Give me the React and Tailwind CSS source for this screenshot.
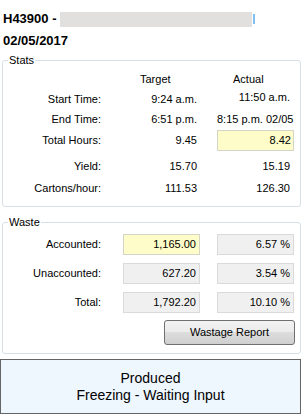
const STATS = [
  { label: 'Start Time:', target: '9:24 a.m.', actual: '11:50 a.m.', h: 'h-[20px]', lift: true },
  { label: 'End Time:', target: '6:51 p.m.', actual: '8:15 p.m. 02/05', h: 'h-[20px]' },
  { label: 'Total Hours:', target: '9.45', actual: '8.42', h: 'h-[23px]', box: true },
  { label: 'Yield:', target: '15.70', actual: '15.19', h: 'h-[28px]' },
  { label: 'Cartons/hour:', target: '111.53', actual: '126.30', h: 'h-[16px]' },
]

const WASTE = [
  { label: 'Accounted:', amount: '1,165.00', pct: '6.57 %', yellow: true },
  { label: 'Unaccounted:', amount: '627.20', pct: '3.54 %' },
  { label: 'Total:', amount: '1,792.20', pct: '10.10 %' },
]

function Box({ children, yellow }) {
  return (
    <div
      className={
        'flex h-[21px] w-[77px] items-center justify-end border pr-[3px] ' +
        (yellow ? 'border-[#d4d4c8] bg-[#fefcc8]' : 'border-[#dadada] bg-[#f0f0f0]')
      }
    >
      {children}
    </div>
  )
}

export default function App() {
  return (
    <div className="h-[415px] w-[303px] overflow-hidden bg-white font-['Liberation_Sans',Arial,sans-serif] text-[11px] leading-[13px] text-black">
      <div className="pl-[3px] pt-[8px] text-[13px] font-bold leading-[22px]">
        <div className="flex items-center whitespace-nowrap">
          <span>H43900 -&nbsp;</span>
          <span className="inline-block h-[15px] w-[192px] bg-[#e1e0de]" />
          <span className="ml-[1px] inline-block h-[10px] w-[2px] bg-[#7fbff2]" />
        </div>
        <div>02/05/2017</div>
      </div>

      <fieldset className="mx-[2px] mt-[2px] w-[299px] rounded-[3px] border border-[#d5dfe5] pb-[10px]">
        <legend className="ml-[5px] px-[1px]">Stats</legend>
        <div className="pt-[2px]">
          <div className="flex h-[20px] items-center">
            <div className="w-[98px]" />
            <div className="w-[96px] pl-[39px]">Target</div>
            <div className="ml-[20px] w-[77px] pl-[16px]">Actual</div>
          </div>
          {STATS.map((r) => (
            <div key={r.label} className={'flex items-center ' + r.h}>
              <div className="w-[98px] text-right">{r.label}</div>
              <div className="w-[96px] text-right">{r.target}</div>
              <div className="ml-[20px] w-[77px]">
                {r.box ? (
                  <div className="flex h-[21px] items-center justify-end border border-[#d4d4c8] bg-[#fefcc8] pr-[2px]">
                    {r.actual}
                  </div>
                ) : (
                  <div className={'whitespace-nowrap pr-[4px] text-right' + (r.lift ? ' pb-[4px]' : '')}>
                    {r.actual}
                  </div>
                )}
              </div>
            </div>
          ))}
        </div>
      </fieldset>

      <fieldset className="mx-[2px] mt-[9px] w-[299px] rounded-[3px] border border-[#d5dfe5] pb-[8px]">
        <legend className="ml-[5px] px-[1px]">Waste</legend>
        <div className="flex flex-col gap-[8px] pt-[5px]">
          {WASTE.map((r) => (
            <div key={r.label} className="flex items-center">
              <div className="w-[98px] text-right">{r.label}</div>
              <div className="ml-[22px]">
                <Box yellow={r.yellow}>{r.amount}</Box>
              </div>
              <div className="ml-[17px]">
                <Box>{r.pct}</Box>
              </div>
            </div>
          ))}
        </div>
        <div className="mt-[7px] flex justify-end pr-[5px]">
          <button className="h-[25px] w-[131px] rounded-[3px] border border-[#707070] bg-[linear-gradient(to_bottom,#f2f2f2_0%,#ebebeb_50%,#dddddd_50%,#cfcfcf_100%)] text-[11px]">
            Wastage Report
          </button>
        </div>
      </fieldset>

      <div className="mt-[5px] flex h-[55px] w-[301px] flex-col items-center justify-center border border-[#646464] bg-[#eef6fe] text-[14px] leading-[17px]">
        <div>Produced</div>
        <div>Freezing - Waiting Input</div>
      </div>
    </div>
  )
}
